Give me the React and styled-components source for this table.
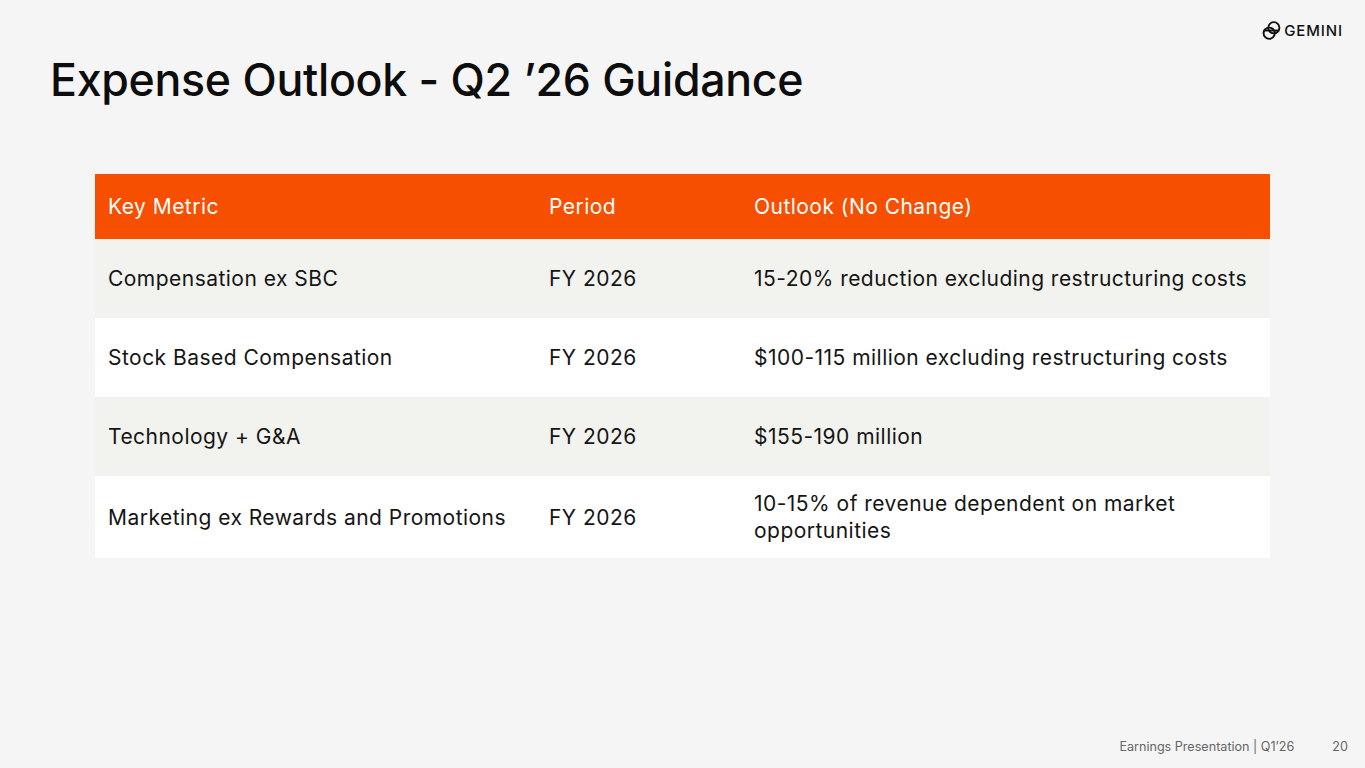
import React from "react";
import styled, { createGlobalStyle } from "styled-components";

const Global = createGlobalStyle`
  html, body { margin: 0; padding: 0; background: #f5f5f5; }
  body { font-family: Inter, "Noto Sans", Arial, sans-serif; color: #111; }
`;

const Slide = styled.div`
  width: 1365px;
  height: 768px;
  box-sizing: border-box;
  background: #f5f5f5;
  display: flex;
  flex-direction: column;
  position: relative;
  overflow: hidden;
`;

const TopBar = styled.div`
  display: flex;
  justify-content: flex-end;
  align-items: center;
  height: 20px;
  padding: 20px 22px 0 0;
`;

const Logo = styled.div`
  display: flex;
  align-items: center;
  gap: 3px;
  font-size: 15px;
  font-weight: 500;
  letter-spacing: 0.9px;
  color: #111;
`;

const Title = styled.h1`
  margin: 13px 0 0 50px;
  font-size: 44.7px;
  font-weight: 500;
  letter-spacing: -0.3px;
  line-height: 54px;
  color: #0d0d0d;
`;

const Table = styled.div`
  margin: 67px 0 0 95px;
  width: 1175px;
  display: grid;
  grid-template-columns: 441px 205px 529px;
`;

const Cell = styled.div`
  display: flex;
  align-items: center;
  padding: 0 13px;
  height: ${(p) => p.$h}px;
  background: ${(p) => p.$bg};
  color: ${(p) => (p.$head ? "#fff" : "#151515")};
  font-size: 21px;
  letter-spacing: 0.47px;
  line-height: 27px;
`;

const Footer = styled.div`
  position: absolute;
  right: 17px;
  bottom: 14px;
  display: flex;
  gap: 38px;
  font-size: 12.6px;
  color: #666;
`;

const rows = [
  ["Compensation ex SBC", "FY 2026", "15-20% reduction excluding restructuring costs", 79],
  ["Stock Based Compensation", "FY 2026", "$100-115 million excluding restructuring costs", 79],
  ["Technology + G&A", "FY 2026", "$155-190 million", 79],
  ["Marketing ex Rewards and Promotions", "FY 2026", "10-15% of revenue dependent on market opportunities", 82],
];

function GeminiMark() {
  return (
    <svg width="19" height="19" viewBox="0 0 18 18" fill="none" stroke="#111" strokeWidth="1.8">
      <circle cx="11.2" cy="6.4" r="5.3" />
      <circle cx="6.8" cy="11.6" r="5.3" />
      <line x1="1.6" y1="9" x2="16.4" y2="9" />
    </svg>
  );
}

export default function App() {
  return (
    <Slide>
      <Global />
      <TopBar>
        <Logo>
          <GeminiMark />
          GEMINI
        </Logo>
      </TopBar>
      <Title>Expense Outlook - Q2 ’26 Guidance</Title>
      <Table>
        {["Key Metric", "Period", "Outlook (No Change)"].map((h) => (
          <Cell key={h} $head $h={65} $bg="#f74f00">{h}</Cell>
        ))}
        {rows.map((r, i) =>
          r.slice(0, 3).map((c, j) => (
            <Cell key={i + "-" + j} $h={r[3]} $bg={i % 2 === 0 ? "#f2f2ee" : "#ffffff"}>
              {c}
            </Cell>
          ))
        )}
      </Table>
      <Footer>
        <span>Earnings Presentation | Q1’26</span>
        <span>20</span>
      </Footer>
    </Slide>
  );
}
